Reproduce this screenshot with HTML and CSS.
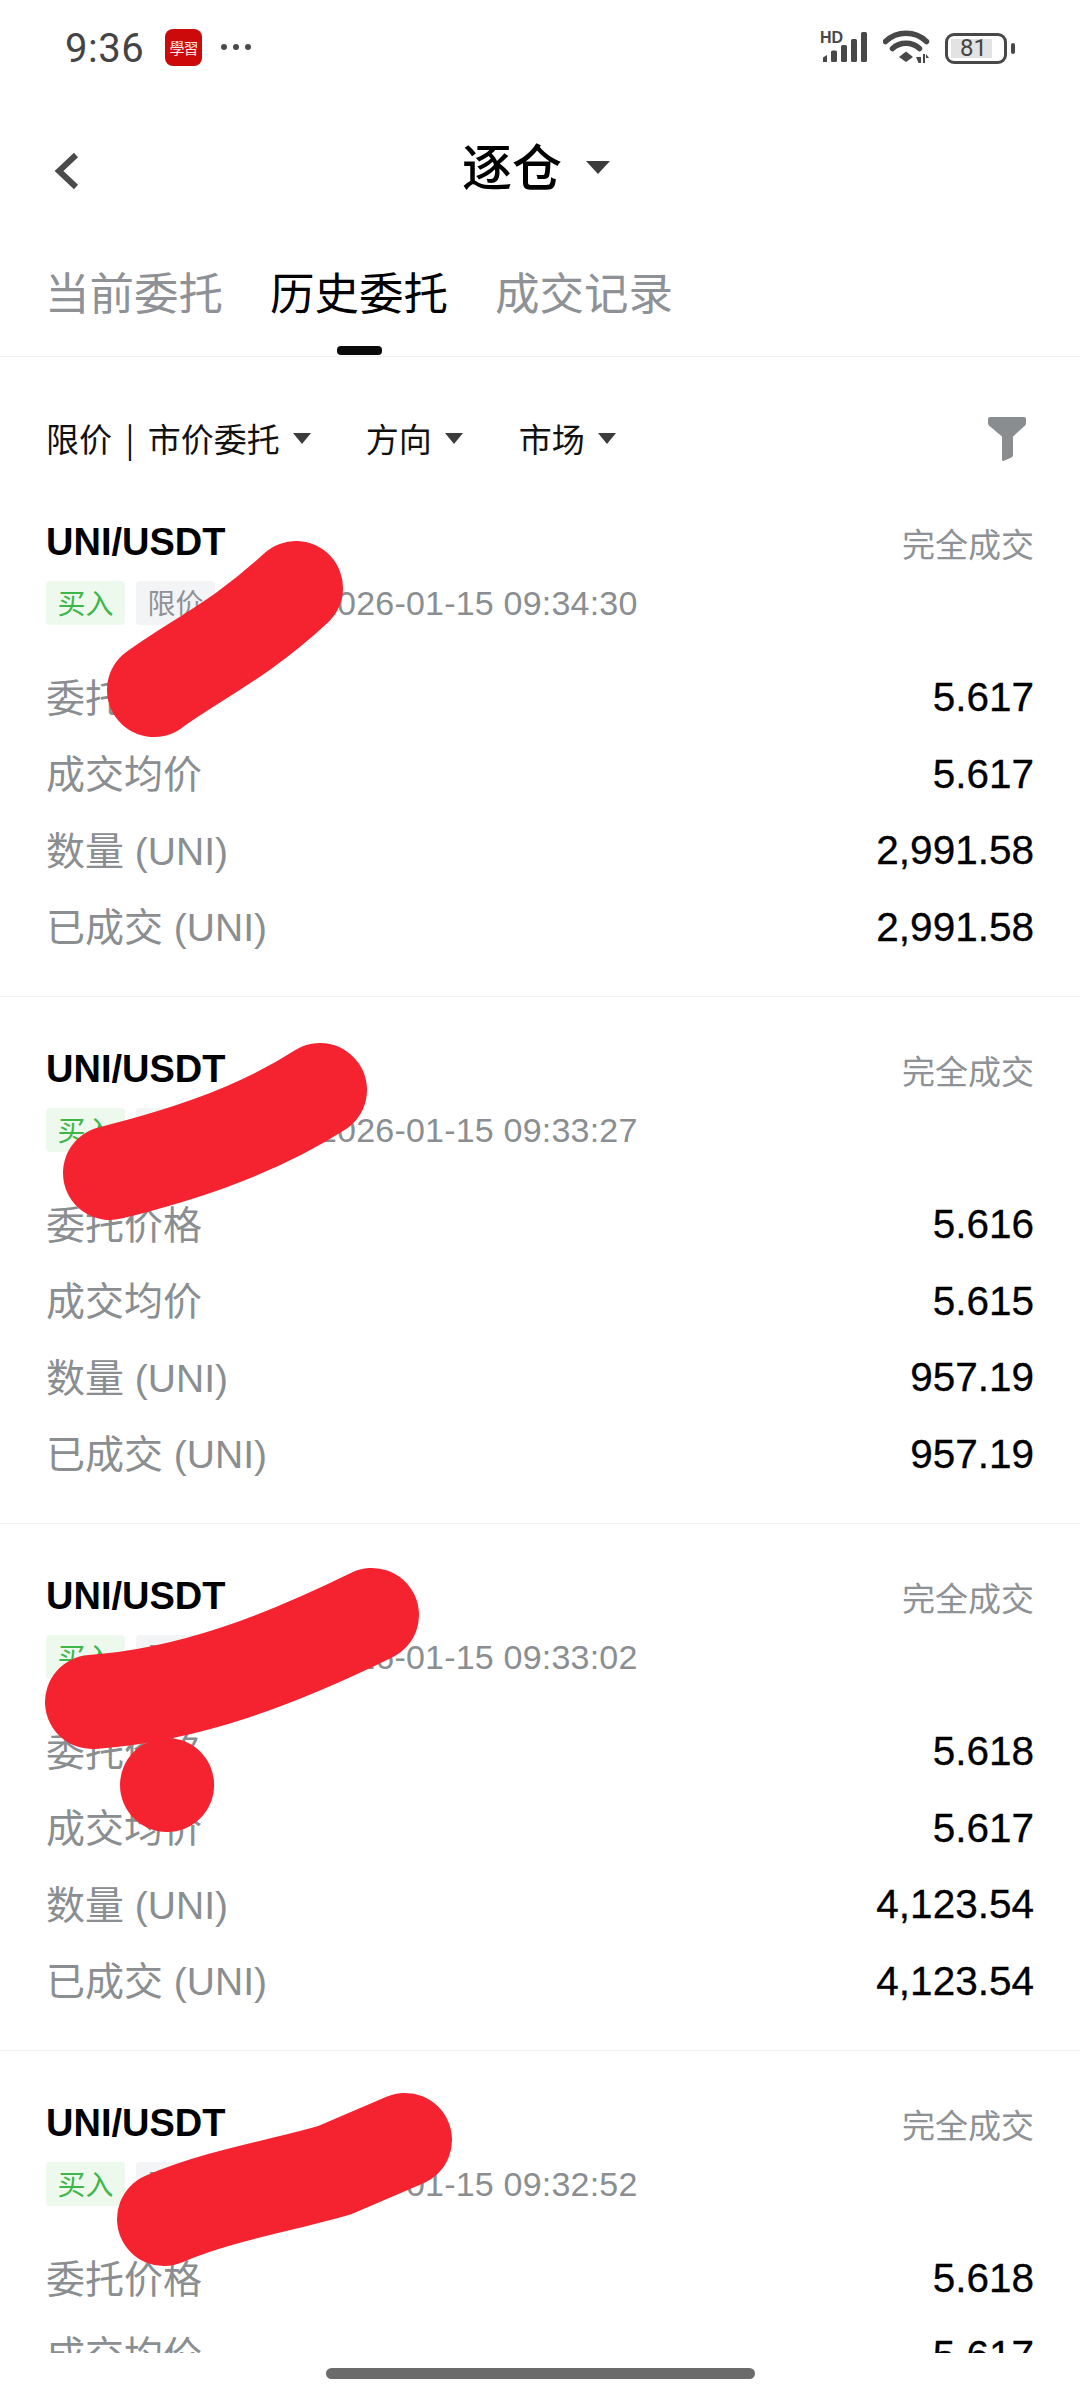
FILE: index.html
```html
<!DOCTYPE html>
<html lang="zh">
<head>
<meta charset="utf-8">
<title>逐仓</title>
<link rel="stylesheet" href="styles.css">
</head>
<body>
<div class="page">
  <div class="status">
    <span class="time">9:36</span>
    <span class="app-icon">學習</span>
    <span class="more"><i></i><i></i><i></i></span>
    <div class="status-right">
      <svg class="signal" width="50" height="34" viewBox="0 0 50 34">
        <text x="0" y="12" class="hd">HD</text>
        <path d="M3 26.500 L7 24 V31 H3 Z" />
        <rect x="11" y="19.500" width="6" height="11.500" rx="1.500"/>
        <rect x="21" y="14" width="6" height="17" rx="1.500"/>
        <rect x="31" y="8" width="6" height="23" rx="1.500"/>
        <rect x="41" y="1" width="6" height="30" rx="1.500"/>
      </svg>
      <svg class="wifi" width="48" height="36" viewBox="0 0 48 36">
        <path d="M2.500 11.500 C14 0.500 32 0.500 43.500 11.500" class="arc"/>
        <path d="M9.500 18.500 C17 11.500 29 11.500 36.500 18.500" class="arc"/>
        <path d="M16 27 L23 21.500 L30 27 L23 32 Z" class="dot"/>
        <path d="M33 27 H38 V33 H35.500 Z M40 24 H42 V33 H40 Z M43 24 L46 28 H43 Z" class="dot"/>
      </svg>
      <div class="battery"><span class="battery-fill"></span><span class="battery-num">81</span></div>
      <span class="battery-tip"></span>
    </div>
  </div>

  <div class="nav">
    <svg class="back" width="26" height="38" viewBox="0 0 26 38"><path d="M22 3 L5 19 L22 35"/></svg>
    <div class="title"><span class="title-text">逐仓</span><i class="tri tri-lg"></i></div>
  </div>

  <div class="tabs">
    <div class="tab">当前委托</div>
    <div class="tab tab-on">历史委托<i class="tab-bar"></i></div>
    <div class="tab">成交记录</div>
  </div>

  <div class="filters">
    <span class="filter filter-1">限价 | 市价委托<i class="tri"></i></span>
    <span class="filter filter-2">方向<i class="tri"></i></span>
    <span class="filter">市场<i class="tri"></i></span>
    <svg class="funnel" width="38" height="44" viewBox="0 0 38 44"><path d="M2 0 H36 Q38 0 38 2 V6 Q38 8 36 9.500 L25 19.500 V38 Q25 39.500 23.500 40.500 L15.500 44 Q14 44 14 42.500 V19.500 L1.500 9 Q0 8 0 6 V2 Q0 0 2 0 Z"/></svg>
  </div>

  <div class="list">
    <section class="card">
      <div class="card-head"><span class="pair">UNI/USDT</span><span class="state">完全成交</span></div>
      <div class="tags"><span class="tag tag-buy">买入</span><span class="tag tag-type">限价</span><span class="date">2026-01-15 09:34:30</span></div>
      <div class="row"><span>委托价格</span><b>5.617</b></div>
      <div class="row"><span>成交均价</span><b>5.617</b></div>
      <div class="row"><span>数量 (UNI)</span><b>2,991.58</b></div>
      <div class="row"><span>已成交 (UNI)</span><b>2,991.58</b></div>
    </section>
    <section class="card">
      <div class="card-head"><span class="pair">UNI/USDT</span><span class="state">完全成交</span></div>
      <div class="tags"><span class="tag tag-buy">买入</span><span class="tag tag-type">限价</span><span class="date">2026-01-15 09:33:27</span></div>
      <div class="row"><span>委托价格</span><b>5.616</b></div>
      <div class="row"><span>成交均价</span><b>5.615</b></div>
      <div class="row"><span>数量 (UNI)</span><b>957.19</b></div>
      <div class="row"><span>已成交 (UNI)</span><b>957.19</b></div>
    </section>
    <section class="card">
      <div class="card-head"><span class="pair">UNI/USDT</span><span class="state">完全成交</span></div>
      <div class="tags"><span class="tag tag-buy">买入</span><span class="tag tag-type">限价</span><span class="date">2026-01-15 09:33:02</span></div>
      <div class="row"><span>委托价格</span><b>5.618</b></div>
      <div class="row"><span>成交均价</span><b>5.617</b></div>
      <div class="row"><span>数量 (UNI)</span><b>4,123.54</b></div>
      <div class="row"><span>已成交 (UNI)</span><b>4,123.54</b></div>
    </section>
    <section class="card">
      <div class="card-head"><span class="pair">UNI/USDT</span><span class="state">完全成交</span></div>
      <div class="tags"><span class="tag tag-buy">买入</span><span class="tag tag-type">限价</span><span class="date">2026-01-15 09:32:52</span></div>
      <div class="row"><span>委托价格</span><b>5.618</b></div>
      <div class="row"><span>成交均价</span><b>5.617</b></div>
      <div class="row"><span>数量 (UNI)</span><b>4,123.54</b></div>
      <div class="row"><span>已成交 (UNI)</span><b>4,123.54</b></div>
    </section>
  </div>

  <div class="home-bar"></div>

  <svg class="scribbles" width="1080" height="2400" viewBox="0 0 1080 2400">
    <path d="M154 690 C 195 660 240 640 296 588"/>
    <path d="M110 1173 C 170 1158 250 1135 320 1090"/>
    <path d="M92 1702 C 190 1695 280 1660 372 1615"/>
    <path d="M167 1785 L167.100 1785"/>
    <path d="M164 2219 C 220 2195 285 2185 335 2170 L 405 2140"/>
  </svg>
</div>
</body>
</html>
```

FILE: styles.css
```css
* { box-sizing: border-box; }
html, body { margin: 0; padding: 0; background: #fff; }
body { font-family: "Liberation Sans", "Noto Sans CJK SC", sans-serif; color: #000; }
i { font-style: normal; display: block; }

.page { position: relative; width: 1080px; height: 2400px; overflow: hidden; display: flex; flex-direction: column; }

/* status bar */
.status { height: 96px; flex: none; display: flex; align-items: center; padding: 0 0 0 65px; }
.time { font-family: Roboto, sans-serif; font-size: 40px; color: #444; width: 100px; letter-spacing: 0.5px; }
.app-icon { width: 37px; height: 37px; margin-top: -2px; border-radius: 8px; background: #cc0a0a; color: #fde8e8; font: 15px/37px "Noto Sans CJK SC", sans-serif; text-align: center; overflow: hidden; white-space: nowrap; letter-spacing: -1px; }
.more { display: flex; gap: 6px; margin: -3px 0 0 19px; }
.more i { width: 6px; height: 6px; border-radius: 50%; background: #4a4a4a; }
.status-right { margin-left: auto; margin-right: 65px; display: flex; align-items: center; }
.signal { fill: #484848; margin-top: -1px; }
.hd { font: bold 16px "Liberation Sans", sans-serif; fill: #484848; }
.wifi { margin-left: 13px; }
.arc { fill: none; stroke: #484848; stroke-width: 5.500; stroke-linecap: round; }
.dot { fill: #484848; }
.battery { position: relative; width: 62px; height: 31px; margin-left: 14px; border: 3px solid #484848; border-radius: 9px; }
.battery-fill { position: absolute; left: 3px; top: 3px; width: 41px; height: 19px; background: #e3e3e3; }
.battery-num { position: relative; display: block; text-align: center; margin-left: -5px; font: 24px/25px Roboto, sans-serif; color: #444; }
.battery-tip { width: 4px; height: 11px; margin-left: 4px; background: #484848; border-radius: 2px; }

/* nav */
.nav { position: relative; height: 142px; flex: none; display: flex; align-items: center; justify-content: center; }
.back { position: absolute; left: 54px; top: 56px; fill: none; stroke: #4a4a4a; stroke-width: 6; }
.title { display: flex; align-items: center; font: 500 50px/60px "Noto Sans CJK SC", sans-serif; margin-left: -8px; }
.title-text { padding-bottom: 6px; }
.tri { width: 0; height: 0; border-left: 9px solid transparent; border-right: 9px solid transparent; border-top: 11px solid #3c3c3c; margin-left: 13px; }
.tri-lg { border-left-width: 12px; border-right-width: 12px; border-top-width: 13px; margin-left: 24px; }

/* tabs */
.tabs { height: 119px; flex: none; display: flex; gap: 47px; padding: 0 0 0 45px; border-bottom: 1px solid #f2f2f2; }
.tab { font: 44.500px/105px "Noto Sans CJK SC", sans-serif; color: #8e9296; }
.tab-on { color: #000; }
.tab-bar { width: 45px; height: 9px; margin: 3px auto 0; border-radius: 4px; background: #0a0a0a; }

/* filters */
.filters { height: 113px; flex: none; display: flex; align-items: flex-start; padding: 59px 54px 0 46px; font: 33px/44px "Noto Sans CJK SC", sans-serif; color: #111; }
.filter { display: flex; align-items: center; white-space: pre; word-spacing: 6px; }
.filter-1 { margin-right: 55px; }
.filter-2 { margin-right: 56px; }
.funnel { margin: 1px 0 0 auto; fill: #898d90; }

/* cards */
.list { height: 1883px; flex: none; overflow: hidden; }
.card { height: 527px; padding: 50px 46px 0 46px; border-bottom: 1px solid #f3f3f3; }
.card-head { display: flex; justify-content: space-between; height: 44px; }
.pair { font: bold 38px/44px "Liberation Sans", sans-serif; color: #000; }
.state { font: 33px/47px "Noto Sans CJK SC", sans-serif; color: #8e9296; }
.tags { display: flex; align-items: center; height: 44px; margin-top: 17px; }
.tag { width: 79px; height: 44px; border-radius: 4px; font: 28px/42px "Noto Sans CJK SC", sans-serif; text-align: center; }
.tag-buy { background: #eef9ee; color: #3db64a; }
.tag-type { margin-left: 11px; background: #f2f4f6; color: #8e9296; }
.date { margin-left: 103px; font: 34px/44px "Liberation Sans", sans-serif; letter-spacing: 0.200px; color: #8a8e91; white-space: nowrap; }
.tags + .row { margin-top: 34px; }
.row { display: flex; justify-content: space-between; align-items: center; height: 76.500px; font: 38px/50px "Liberation Sans", "Noto Sans CJK SC", sans-serif; color: #8a8e91; }
.row span { font-size: 39px; padding-top: 3px; }
.row b { font-weight: 400; font-size: 40.500px; color: #000; -webkit-text-stroke: 0.3px #000; }

/* home indicator */
.home-bar { width: 429px; height: 11px; margin: 15px auto 0; flex: none; border-radius: 6px; background: #6b6b6b; }

/* redaction strokes drawn over the screenshot */
.scribbles { position: absolute; left: 0; top: 0; fill: none; stroke: #f5222f; stroke-width: 94; stroke-linecap: round; stroke-linejoin: round; pointer-events: none; }
```
